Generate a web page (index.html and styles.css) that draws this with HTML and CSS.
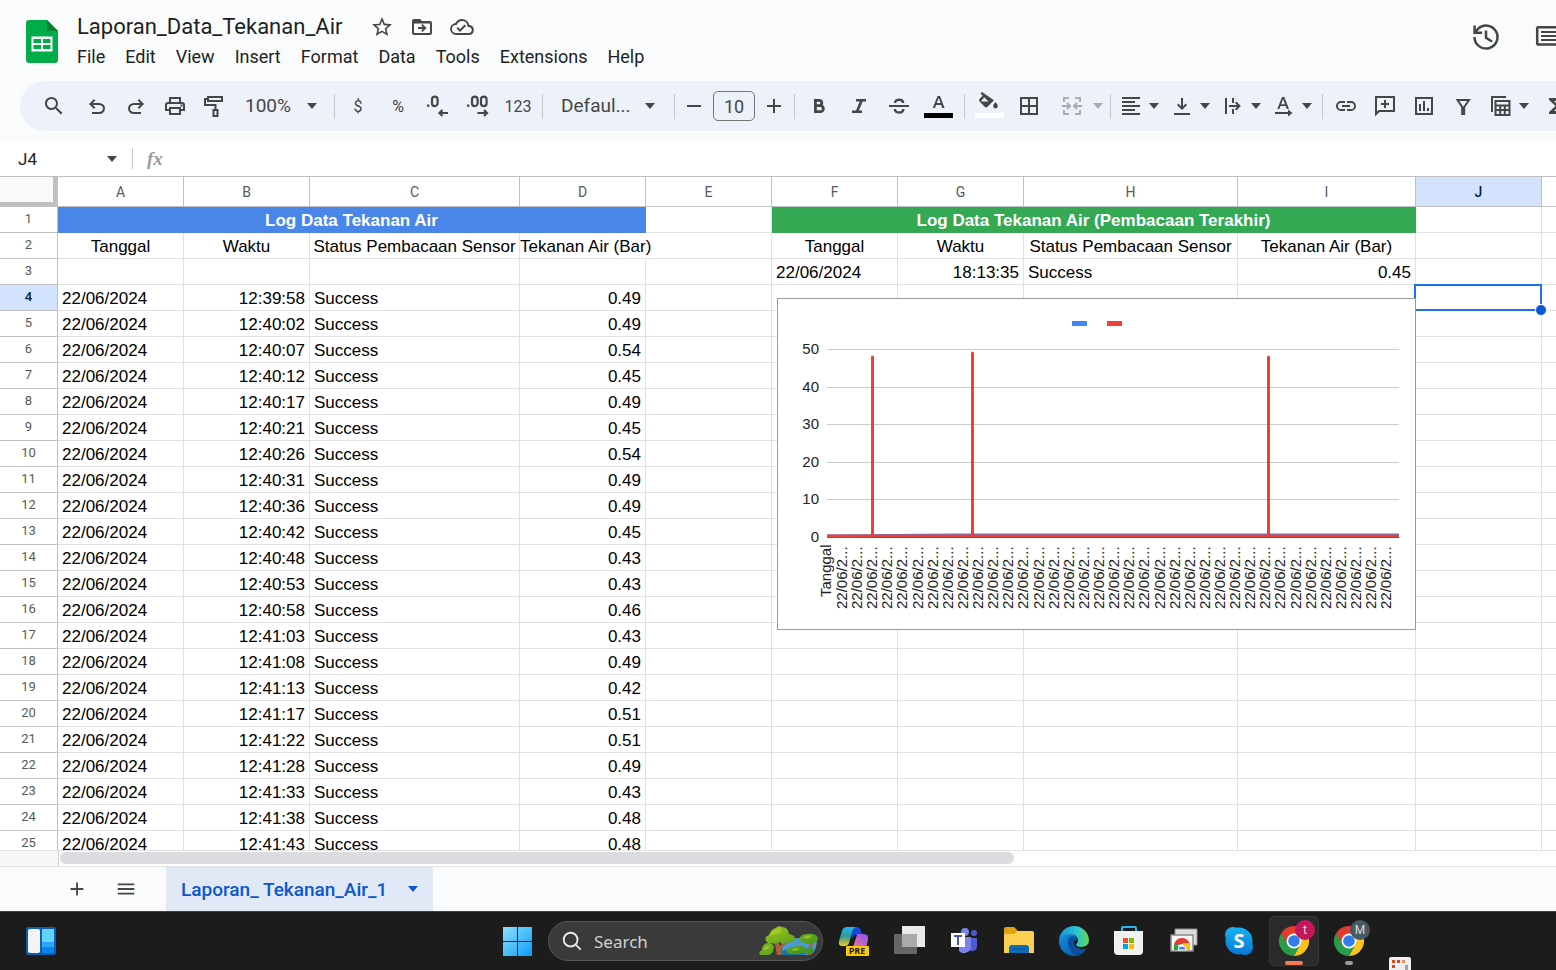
FILE: index.html
```html
<!DOCTYPE html>
<html lang="en">
<head>
<meta charset="utf-8">
<title>Laporan_Data_Tekanan_Air</title>
<link rel="stylesheet" href="styles.css">
</head>
<body>
<svg class="sprite" aria-hidden="true">
  <symbol id="caret" viewBox="0 0 12 6"><path d="M1 0h10L6 6z"/></symbol>
  <symbol id="search" viewBox="0 0 24 24"><path d="M15.5 14h-.8l-.3-.3A6.5 6.5 0 1 0 13.7 14.4l.3.3v.8l5 5 1.5-1.5zm-6 0a4.5 4.5 0 1 1 0-9 4.5 4.5 0 0 1 0 9z"/></symbol>
  <symbol id="undo" viewBox="0 0 24 24"><path d="M7 20v-2h7.100q1.600 0 2.700-.900T18 14.500t-1.200-2.500-2.700-1H7.800l2.600 2.600L9 15l-5-5 5-5 1.400 1.400L7.800 9h6.300q2.400 0 4.200 1.600T20 14.500t-1.700 3.900T14.100 20z"/></symbol>
  <symbol id="plus" viewBox="0 0 24 24"><path d="M11 5h2v6h6v2h-6v6h-2v-6H5v-2h6z"/></symbol>
  <symbol id="chrome" viewBox="0 0 32 32"><path fill="#e33b2e" d="M3 8.500 9.700 20 16 8.500H29A15 15 0 0 0 3 8.500z"/><path fill="#2a9d49" d="M3 8.500A15 15 0 0 0 16 31l6.500-11.500H10z"/><path fill="#fcc31e" d="M29 8.500H16l6.500 11L16 31A15 15 0 0 0 29 8.500z"/><circle cx="16" cy="16" r="7.500" fill="#fff"/><circle cx="16" cy="16" r="5.800" fill="#2f7de9"/></symbol>
</svg>

<header class="doc-header">
  <svg class="doc-logo" viewBox="0 0 32 44" aria-label="Sheets" role="img"><path fill="#00ac47" d="M3 0h18l11 11v29a3 3 0 0 1-3 3H3a3 3 0 0 1-3-3V3a3 3 0 0 1 3-3z"/><path fill="#00832d" d="M21 0l11 11H21z"/><path fill="#fff" fill-rule="evenodd" d="M5.500 16.500h21v15h-21zm2 2.500v4h7.500V19zm9.500 0v4h7.500V19zm-9.500 6v4h7.500v-4zm9.500 0v4h7.500v-4z"/></svg>
  <div class="doc-heading">
    <div class="title-row">
      <h1 class="doc-title">Laporan_Data_Tekanan_Air</h1>
      <button class="title-btn" aria-label="Star"><svg viewBox="0 0 24 24"><path d="M22 9.240l-7.190-.620L12 2 9.190 8.630 2 9.240l5.460 4.730L5.820 21 12 17.270 18.180 21l-1.630-7.030zM12 15.400l-3.760 2.270 1-4.280-3.320-2.880 4.380-.380L12 6.100l1.710 4.040 4.380.380-3.320 2.880 1 4.280z"/></svg></button>
      <button class="title-btn" aria-label="Move"><svg viewBox="0 0 24 24"><path fill-rule="evenodd" d="M4 4h6l2 2h8a2 2 0 0 1 2 2v10a2 2 0 0 1-2 2H4a2 2 0 0 1-2-2V6a2 2 0 0 1 2-2zm0 4.500V18h16V8.500zM12.500 9l4 4-4 4-1.300-1.300 1.700-1.800H8v-1.800h4.900l-1.700-1.800z"/></svg></button>
      <button class="title-btn" aria-label="Saved to Drive"><svg viewBox="0 0 24 24"><path fill-rule="evenodd" d="M19.350 10.040A7.490 7.490 0 0 0 12 4C9.110 4 6.600 5.640 5.350 8.040A6 6 0 0 0 6 20h13a5 5 0 0 0 .350-9.960zM19 18H6a4 4 0 0 1-.440-7.980l1.070-.110.500-.950A5.500 5.500 0 0 1 17.390 10.430l.300 1.500 1.530.110A3 3 0 0 1 19 18zm-9-3.800-2.100-2.100-1.400 1.400L10 17l6-6-1.400-1.400z"/></svg></button>
    </div>
    <nav class="menu">
      <button>File</button><button>Edit</button><button>View</button><button>Insert</button><button>Format</button><button>Data</button><button>Tools</button><button>Extensions</button><button>Help</button>
    </nav>
  </div>
  <div class="doc-actions">
    <button aria-label="Version history"><svg viewBox="0 0 30 30"><path fill="none" stroke="#444746" stroke-width="2.500" d="M3.500 15a11.500 11.500 0 1 0 3.500-8.200L4 10M3.600 3.500v7.300H11M15 8.500v7.200l6 3.800"/></svg></button>
    <button aria-label="Comments"><svg viewBox="0 0 30 30"><path fill="none" stroke="#444746" stroke-width="2.500" d="M5.200 5.200h22v21l-4-3.800h-18a1 1 0 0 1-1-1V6.200a1 1 0 0 1 1-1z"/><path stroke="#444746" stroke-width="2" d="M8 10h16M8 14h16M8 18h16"/></svg></button>
  </div>
</header>

<div class="toolbar" role="toolbar" aria-label="Main toolbar">
  <button class="tool first" aria-label="Search the menus"><svg viewBox="0 0 24 24"><use href="#search"/></svg></button>
  <div class="group tight">
    <button class="tool" aria-label="Undo"><svg viewBox="0 0 24 24"><use href="#undo"/></svg></button>
    <button class="tool" aria-label="Redo"><svg class="mirror" viewBox="0 0 24 24"><use href="#undo"/></svg></button>
    <button class="tool" aria-label="Print"><svg viewBox="0 0 24 24"><path fill-rule="evenodd" d="M6 3h12v5h1a3 3 0 0 1 3 3v6h-4v4H6v-4H2v-6a3 3 0 0 1 3-3h1zm2 2v3h8V5zM4 15h2v-2h12v2h2v-4a1 1 0 0 0-1-1H5a1 1 0 0 0-1 1zm4 0v4h8v-4zm9.500-4.500h2v2h-2z"/></svg></button>
    <button class="tool" aria-label="Paint format"><svg viewBox="0 0 24 24"><path fill="none" stroke="#444746" stroke-width="2" d="M6 3h14v4H6zM6 5H3v6h10.500V16M11.500 16h4v6h-4z"/></svg></button>
  </div>
  <label class="picker zoom-picker"><select aria-label="Zoom"><option>100%</option></select><svg class="caret"><use href="#caret"/></svg></label>
  <span class="sep"></span>
  <div class="group">
    <button class="tool text-tool" aria-label="Format as currency">$</button>
    <button class="tool text-tool" aria-label="Format as percent">%</button>
    <button class="tool" aria-label="Decrease decimal places"><svg viewBox="0 0 24 24"><path d="M1 10.500h2.300v2.300H1z"/><path fill="none" stroke="#444746" stroke-width="2.200" d="M6 5.500a2.800 2.800 0 0 1 5.600 0v3.800a2.800 2.800 0 0 1-5.600 0zM22 19h-8M16.500 16l-3 3 3 3"/></svg></button>
    <button class="tool" aria-label="Increase decimal places"><svg viewBox="0 0 24 24"><path d="M1 10.500h2.300v2.300H1z"/><path fill="none" stroke="#444746" stroke-width="2.200" d="M6 5.500a2.800 2.800 0 0 1 5.600 0v3.800a2.800 2.800 0 0 1-5.600 0zM15 5.500a2.800 2.800 0 0 1 5.600 0v3.800a2.800 2.800 0 0 1-5.600 0zM11.500 19h9M18 16l3 3-3 3"/></svg></button>
    <button class="tool text-tool" aria-label="More formats">123</button>
  </div>
  <span class="sep near"></span>
  <label class="picker font-picker"><select aria-label="Font"><option>Defaul...</option></select><svg class="caret"><use href="#caret"/></svg></label>
  <span class="sep"></span>
  <div class="size-group">
    <button class="step" aria-label="Decrease font size"><svg viewBox="0 0 24 24"><path d="M5 11h14v2H5z"/></svg></button>
    <input class="size-input" aria-label="Font size" value="10">
    <button class="step" aria-label="Increase font size"><svg viewBox="0 0 24 24"><use href="#plus"/></svg></button>
  </div>
  <span class="sep"></span>
  <div class="group">
    <button class="tool" aria-label="Bold"><svg viewBox="0 0 24 24"><path fill="none" stroke="#444746" stroke-width="2.800" d="M8.400 6.400h4.200a2.700 2.700 0 0 1 0 5.300H8.400zm0 5.300h5a2.900 2.900 0 0 1 0 5.900h-5z"/></svg></button>
    <button class="tool" aria-label="Italic"><svg viewBox="0 0 24 24"><path d="M9 5h10v2.600h-3.300l-3.800 8.800H15V19H5v-2.600h4l3.700-8.800H9z"/></svg></button>
    <button class="tool" aria-label="Strikethrough"><svg viewBox="0 0 24 24"><path fill="none" stroke="#444746" stroke-width="2" d="M2 12h20"/><path fill="none" stroke="#444746" stroke-width="2.400" d="M16.200 9C16 7 14.500 5.700 12.200 5.700S8 6.900 8 9M7.800 15c.200 2.300 1.800 3.500 4.300 3.500s4.200-1.300 4.200-3.500"/></svg></button>
    <button class="tool" aria-label="Text color"><svg class="tall" viewBox="0 0 30 30"><path d="M13.600 5h2.400l4.600 12h-2.300l-1.100-3h-5.100L11 17H8.700zm-.8 7h3.800l-1.900-5z"/><path fill="#000" d="M0 22h29v5H0z"/></svg></button>
  </div>
  <span class="sep close"></span>
  <div class="group">
    <button class="tool" aria-label="Fill color"><svg class="tall" viewBox="0 0 30 30"><path d="M8 1 6.500 2.500l2.200 2.200-3 3q-1.400 1.500 0 3l5 5q1.400 1.400 2.800 0l6.500-6.500zm2.200 5.200L14.500 10.500H7zM21.500 11s-2.300 2.500-2.300 4.100a2.300 2.300 0 0 0 4.600 0c0-1.600-2.300-4.100-2.300-4.100z"/><path fill="#fff" d="M1 22h29v5H1z"/></svg></button>
    <button class="tool" aria-label="Borders"><svg viewBox="0 0 24 24"><path fill="none" stroke="#444746" stroke-width="2" d="M4 4h16v16H4zM12 4v16M4 12h16"/></svg></button>
  </div>
  <button class="split faded" aria-label="Merge cells" disabled><svg viewBox="0 0 24 24"><path fill="none" stroke="#444746" stroke-width="2" d="M9 4H4v4M4 16v4h5M15 4h5v4M20 16v4h-5M2 12h7M22 12h-7M7 9l3 3-3 3M17 9l-3 3 3 3"/></svg><svg class="caret"><use href="#caret"/></svg></button>
  <span class="sep close"></span>
  <div class="group splits">
    <button class="split" aria-label="Horizontal align"><svg viewBox="0 0 24 24"><path d="M3 3h18v2H3zm0 4h13v2H3zm0 4h18v2H3zm0 4h13v2H3zm0 4h18v2H3z"/></svg><svg class="caret"><use href="#caret"/></svg></button>
    <button class="split" aria-label="Vertical align"><svg viewBox="0 0 24 24"><path d="M4 19h16v2H4zM11 4h2v8.200l2.600-2.600L17 11l-5 5-5-5 1.400-1.400 2.600 2.600z"/></svg><svg class="caret"><use href="#caret"/></svg></button>
    <button class="split" aria-label="Text wrapping"><svg viewBox="0 0 24 24"><path d="M4 4h2v16H4zM11 4h2v5h-2zM11 15h2v5h-2zM8 11h8l-2-2 1.400-1.400L19.800 12l-4.400 4.400L14 15l2-2H8z"/></svg><svg class="caret"><use href="#caret"/></svg></button>
    <button class="split" aria-label="Text rotation"><svg viewBox="0 0 24 24"><path d="M10 3h2.300L17 15h-2.200l-1.100-3H8.500l-1.100 3H5.300zm-.8 7.200H13L11.100 5zM3 18h13v-2.500l4.500 3.500-4.500 3.500V20H3z"/></svg><svg class="caret"><use href="#caret"/></svg></button>
  </div>
  <span class="sep after-splits"></span>
  <div class="group tight">
    <button class="tool" aria-label="Insert link"><svg viewBox="0 0 24 24"><path d="M3.900 12A3.100 3.100 0 0 1 7 8.900h4V7H7a5 5 0 0 0 0 10h4v-1.900H7A3.100 3.100 0 0 1 3.900 12zM8 13h8v-2H8zm9-6h-4v1.900h4a3.100 3.100 0 0 1 0 6.200h-4V17h4a5 5 0 0 0 0-10z"/></svg></button>
    <button class="tool" aria-label="Insert comment"><svg viewBox="0 0 24 24"><path fill="none" stroke="#444746" stroke-width="2" d="M3 20V3h18v14H6zM12 6v8M8 10h8"/></svg></button>
    <button class="tool" aria-label="Insert chart"><svg viewBox="0 0 24 24"><path fill="none" stroke="#444746" stroke-width="2" d="M4 4h16v16H4zM8 10v7M12 7v10M16 14v3"/></svg></button>
    <button class="tool" aria-label="Create a filter"><svg viewBox="0 0 24 24"><path fill="none" stroke="#444746" stroke-width="2" d="M6.500 6h11.500l-4.800 7V20h-2v-7z"/></svg></button>
  </div>
  <button class="split table-views" aria-label="Table views"><svg viewBox="0 0 24 24"><path fill="none" stroke="#444746" stroke-width="2" d="M6.500 7h14v14h-14zM6.500 11.500h14M6.500 16h14M11.200 12v9M15.800 12v9M3 18V3h14"/></svg><svg class="caret"><use href="#caret"/></svg></button>
  <button class="tool" aria-label="Functions"><svg viewBox="0 0 24 24"><path d="M18 4H6v2l6.500 6L6 18v2h12v-3h-7l5-5-5-5h7z"/></svg></button>
</div>

<div class="formula-bar">
  <input class="name-box" aria-label="Name box" value="J4">
  <button class="name-menu" aria-label="Named ranges"><svg class="caret"><use href="#caret"/></svg></button>
  <span class="formula-sep"></span>
  <label class="fx" for="formula">fx</label>
  <input id="formula" class="formula-input">
</div>

<main class="sheet">
  <table class="grid">
    <colgroup><col class="w-row"><col class="w-std"><col class="w-std"><col class="w-status"><col class="w-std"><col class="w-std"><col class="w-std"><col class="w-std"><col class="w-status2"><col class="w-reading"><col class="w-std"><col class="w-std"></colgroup>
    <thead>
      <tr><td class="corner"></td><th>A</th><th>B</th><th>C</th><th>D</th><th>E</th><th>F</th><th>G</th><th>H</th><th>I</th><th class="active">J</th><th></th></tr>
    </thead>
    <tbody id="rows">
      <tr><th>1</th><td colspan="4" class="banner blue">Log Data Tekanan Air</td><td></td><td colspan="4" class="banner green">Log Data Tekanan Air (Pembacaan Terakhir)</td><td></td><td></td></tr>
      <tr><th>2</th><td class="label">Tanggal</td><td class="label">Waktu</td><td class="label">Status Pembacaan Sensor</td><td class="label spill">Tekanan Air (Bar)</td><td></td><td class="label">Tanggal</td><td class="label">Waktu</td><td class="label">Status Pembacaan Sensor</td><td class="label">Tekanan Air (Bar)</td><td></td><td></td></tr>
      <tr><th>3</th><td></td><td></td><td></td><td></td><td></td><td>22/06/2024</td><td class="num">18:13:35</td><td>Success</td><td class="num">0.45</td><td></td><td></td></tr>
    </tbody>
  </table>
  <div class="selection"><span class="handle"></span></div>
  <figure class="chart">
    <svg id="chart" viewBox="0 0 639 332" role="img" aria-label="Tekanan air chart"></svg>
  </figure>
</main>

<div class="scroll-strip"><div class="strip-head"></div><div class="track"><div class="thumb"></div></div></div>

<footer class="tabs">
  <button class="tab-btn" aria-label="Add sheet"><svg viewBox="0 0 24 24"><use href="#plus"/></svg></button>
  <button class="tab-btn" aria-label="All sheets"><svg viewBox="0 0 24 24"><path d="M3 6h18v2H3zm0 5h18v2H3zm0 5h18v2H3z"/></svg></button>
  <button class="tab">Laporan_ Tekanan_Air_1 <svg class="caret"><use href="#caret"/></svg></button>
</footer>

<div class="taskbar">
  <button class="widgets" aria-label="Widgets"><svg viewBox="0 0 30 28"><rect width="30" height="28" rx="2" fill="#0c5fb3"/><rect x="2" y="2" width="12" height="24" rx="2" fill="#f4f4f4"/><path fill="#62d4fb" d="M16 2h12v13H16z"/><path fill="#2aa6f6" d="M16 15h12v5H16z"/><path fill="#0a84ea" d="M16 20h12v6H16z"/></svg></button>
  <div class="apps">
    <button class="app" aria-label="Start"><svg viewBox="0 0 32 32"><defs><linearGradient id="win" x1="0" y1="0" x2="1" y2="1"><stop offset="0" stop-color="#8be2ff"/><stop offset="1" stop-color="#0c9bf5"/></linearGradient></defs><path fill="url(#win)" d="M1 2h14v14H1zM16 2h14v14H16zM1 17h14v14H1zM16 17h14v14H16z"/></svg></button>
    <label class="search">
      <svg class="search-icon" viewBox="0 0 24 24"><path fill="none" stroke="#e8e8e8" stroke-width="2" d="M10.500 3a7.500 7.500 0 1 0 0 15 7.500 7.500 0 0 0 0-15zM16 16l5.500 5.500"/></svg>
      <input placeholder="Search" aria-label="Search">
      <svg class="scene" viewBox="0 0 60 32"><defs><linearGradient id="leaf" x1="0" y1="0" x2="1" y2="1"><stop offset="0" stop-color="#a5c91c"/><stop offset="1" stop-color="#2e8b1d"/></linearGradient></defs><path fill="#4b9ad8" d="M22 16c12-4 24-4 36 0-1 9-4 14-9 14H20c4-4 3-8 2-14z"/><path fill="#176fa5" d="M22 27c8-5 18-3 26 2l-6 1H20z"/><path fill="#a8623a" d="M15 14h3l3 7 6-5 1 2-6 6 1 6h-5zM51 18h3l-2 12h-4z"/><path fill="url(#leaf)" d="M1 30q-2-3 2-5 0-6 6-7 5 0 6 4-1 8-6 8zM7 16q-2-4 3-6 2-6 7-7 2-3 6-1 6 0 7 7 7 1 6 6-3 4-8 2-4 3-7 0-5 3-8 1-4 1-6-2zM27 27q1-5 8-5 8-4 13 3-3 5-11 4-6 1-10-2zM40 15q1-6 8-6 9-1 11 4 0 5-6 5-6 3-13-3zM47 28q-1-4 3-6 4 0 5 4-3 4-8 2z"/><path fill="#b8d42e" opacity=".6" d="M10 11q4-6 10-8 3 1 2 5-6 1-12 3zM4 25q3-5 7-4-1 4-7 4zM44 13q4-4 9-2-3 4-9 2zM32 25q5-3 9-1-4 3-9 1z"/></svg>
    </label>
    <button class="app" aria-label="Copilot"><svg viewBox="0 0 32 32"><defs><linearGradient id="cp1" x1="0" y1="0" x2="0" y2="1"><stop offset="0" stop-color="#1cb7f5"/><stop offset=".5" stop-color="#2f9d91"/><stop offset="1" stop-color="#f5cb20"/></linearGradient><linearGradient id="cp2" x1="0" y1="1" x2="1" y2="0"><stop offset="0" stop-color="#fb7a80"/><stop offset="1" stop-color="#8a52f4"/></linearGradient></defs><path fill="#1649d8" d="M12 2h7q3 0 4 4l1 4h-6q-3 0-4 4z"/><path fill="url(#cp2)" d="M20 9h6q5 0 4 6l-2 8H10q4 0 6-6l1-4q1-4 3-4z"/><path fill="#1c1c1c" d="M16 10h3l-4 12h-4z"/><path fill="url(#cp1)" d="M9 2h9q-3 1-4 5l-3 11q-1 3-4 3H4q-4 0-3-5l3-10q1-4 5-4z"/><rect x="8" y="21" width="23" height="10" rx="1" fill="#ffc80d"/><text x="19" y="29" class="pre-tag">PRE</text></svg></button>
    <button class="app" aria-label="Task view"><svg viewBox="0 0 32 32"><path fill="#e9e9e9" d="M9 1h23v21H9z"/><path fill="#666" d="M1 9h23v20H1z"/><path fill="#aaa" d="M9 9h15v13H9z"/></svg></button>
    <button class="app" aria-label="Teams"><svg viewBox="0 0 32 32"><circle cx="17" cy="7" r="4" fill="#7b83eb"/><circle cx="26" cy="8" r="3" fill="#5059c9"/><path fill="#5059c9" d="M20 13h9v9a5 5 0 0 1-9 2z"/><path fill="#7b83eb" d="M11 12h12v9a7 7 0 0 1-12 5z"/><path fill="#fff" d="M3 8h14v14H3z"/><path fill="#4b53bc" d="M6 10h8v2h-3v8H9v-8H6z"/></svg></button>
    <button class="app" aria-label="File Explorer"><svg viewBox="0 0 32 32"><path fill="#e2a013" d="M1 4q0-2 2-2h8l4 4v5H1z"/><path fill="#fdd054" d="M1 9h10l4-3h14q2 0 2 2v20H1z"/><path fill="#0c6dbb" d="M6 28v-5q0-3 3-3h14q3 0 3 3v5z"/><path stroke="#064a8a" d="M9 24h14"/></svg></button>
    <button class="app" aria-label="Edge"><svg viewBox="0 0 32 32"><defs><linearGradient id="eg1"><stop offset="0" stop-color="#168fe0"/><stop offset=".6" stop-color="#2ec5cf"/><stop offset="1" stop-color="#63d94d"/></linearGradient><linearGradient id="eg2" x1="0" y1="0" x2="1" y2="1"><stop offset="0" stop-color="#1393e2"/><stop offset="1" stop-color="#0b4d9c"/></linearGradient></defs><path fill="url(#eg2)" d="M1 15q4-8 11-7 6 2 7 7-5 0-3 5 3 5 12 4-5 7-12 7A15 15 0 0 1 1 15z"/><path fill="#0b4e9e" d="M10 18q-1-6 5-7 3 1 4 4-5 0-3 5 3 5 12 4-4 6-9 7-8-4-9-13z"/><path fill="url(#eg1)" d="M1 15A15 15 0 0 1 16 1a15 15 0 0 1 15 14q0 7-8 7-5 0-5-3 2-1 2-4-1-6-8-6-7 0-11 6z"/></svg></button>
    <button class="app" aria-label="Microsoft Store"><svg viewBox="0 0 32 32"><path fill="none" stroke="#28b7ed" stroke-width="2" d="M9 8V3q0-1 1-1h12q1 0 1 1v5"/><path fill="#f1f1f1" d="M1 6h29v20q0 4-4 4H5q-4 0-4-4z"/><path fill="#f25022" d="M10 13h5v5h-5z"/><path fill="#7fba00" d="M16 13h5v5h-5z"/><path fill="#00a4ef" d="M10 19h5v5h-5z"/><path fill="#ffb900" d="M16 19h5v5h-5z"/></svg></button>
    <button class="app" aria-label="Remote desktop"><svg viewBox="0 0 32 32"><path fill="#ddd" stroke="#8c8c8c" d="M7 4h22v16H7z"/><path fill="#f6f6f6" stroke="#8c8c8c" stroke-width="1.500" d="M3 10h22v16H3z"/><path fill="#e33b2e" d="M6 21a8 8 0 0 1 16 0l-8-2z"/><path fill="#2a9d49" d="M6 25q-1-5 2-7l5 7z"/><path fill="#fcc31e" d="M22 25q1-5-1-7h-6l2 7z"/><path fill="#4384f3" stroke="#fff" d="M10 25a4 4 0 1 1 8 0z"/></svg></button>
    <button class="app" aria-label="Skype"><svg viewBox="0 0 32 32"><defs><linearGradient id="sk" gradientUnits="userSpaceOnUse" x1="0" y1="2" x2="0" y2="30"><stop offset="0" stop-color="#18b3f3"/><stop offset="1" stop-color="#0878d4"/></linearGradient></defs><g fill="url(#sk)"><circle cx="16" cy="16" r="13.500"/><circle cx="10" cy="10" r="8"/><circle cx="22" cy="22" r="8"/></g><text x="16" y="23" class="skype-s">S</text></svg></button>
    <button class="app current" aria-label="Chrome, profile t"><svg viewBox="0 0 32 32"><use href="#chrome"/></svg><span class="badge pink">t</span><span class="running"></span></button>
    <button class="app" aria-label="Chrome, profile M"><svg viewBox="0 0 32 32"><use href="#chrome"/></svg><span class="badge slate">M</span><span class="running idle"></span></button>
  </div>
  <svg class="tray-peek" viewBox="0 0 22 13" aria-hidden="true"><rect width="22" height="18" rx="2" fill="#efefef"/><path fill="#d9481c" d="M3 3h3v3H3zm5 0h3v3H8zM3 8h3v3H3z"/><path fill="#f08b6c" d="M13 3h3v3h-3z"/><path fill="#9da3a6" d="M16 8h3v5h-3z"/></svg>
</div>
<script src="script.js"></script>
</body>
</html>
```

FILE: styles.css
```css
* { box-sizing: border-box; }

body {
  margin: 0;
  height: 100vh;
  display: flex;
  flex-direction: column;
  overflow: hidden;
  background: #f9fbfd;
  color: #1f1f1f;
  font-family: Roboto, "Liberation Sans", sans-serif;
}

button, input, select {
  font: inherit;
  color: inherit;
  background: none;
  border: 0;
  padding: 0;
  outline: 0;
}

.sprite { display: none; }
svg { display: block; fill: #444746; }
.caret { width: 12px; height: 6px; flex: none; }

/* Document header */
.doc-header {
  display: flex;
  flex: none;
  height: 81px;
  padding: 13px 0 0 26px;
}
.doc-logo { width: 32px; height: 44px; margin-top: 7px; flex: none; }
.doc-heading { margin-left: 19px; }
.title-row { display: flex; align-items: center; height: 28px; gap: 16px; }
.doc-title { margin: 0 12px 0 0; font-size: 22px; font-weight: 400; line-height: 28px; }
.title-btn svg { width: 24px; height: 24px; }
.menu { display: flex; gap: 20px; margin-top: 4px; }
.menu button { font-size: 18px; line-height: 24px; }
.doc-actions { display: flex; gap: 32px; margin: 9px -7px 0 auto; }
.doc-actions button { height: 30px; }
.doc-actions svg { width: 30px; height: 30px; }

/* Toolbar */
.toolbar {
  display: flex;
  align-items: center;
  flex: none;
  height: 50px;
  margin-left: 20px;
  padding-left: 14px;
  overflow: hidden;
  border-radius: 25px 0 0 25px;
  background: #edf1fa;
  color: #444746;
}
.group { display: flex; flex: none; }
.tool {
  flex: none;
  width: 40px;
  height: 36px;
  display: flex;
  align-items: center;
  justify-content: center;
}
.tool svg, .split svg:first-child, .step svg { width: 24px; height: 24px; flex: none; }
.tool .tall { width: 30px; height: 30px; }
.tool .mirror { transform: scaleX(-1); }
.tight .tool { width: 39px; }
.first { margin-right: 3px; }
.text-tool { font-size: 16px; }
.sep { flex: none; width: 1px; height: 25px; margin: 0 3px 0 8px; background: #c7c7c7; }
.sep.near { margin: 0 6px 0 4px; }
.sep.close { margin: 0 4px 0 5px; }
.sep.after-splits { margin: 0 3px 0 1px; }
.picker { display: flex; flex: none; align-items: center; position: relative; }
.picker select { appearance: none; width: 100%; font-size: 19px; line-height: 26px; }
.picker .caret { position: absolute; right: 8px; pointer-events: none; }
.zoom-picker { width: 93px; }
.zoom-picker select { padding-left: 12px; }
.font-picker { width: 117px; }
.font-picker select { padding-left: 12px; }
.font-picker .caret { right: 10px; }
.size-group { display: flex; flex: none; align-items: center; gap: 5px; margin-left: 2px; }
.step { width: 28px; height: 28px; display: flex; align-items: center; justify-content: center; }
.size-group + .sep { margin: 0 4px 0 6px; }
.size-input {
  width: 42px;
  height: 30px;
  border: 1px solid #747775;
  border-radius: 5px;
  font-size: 18px;
  text-align: center;
}
.split {
  flex: none;
  width: 51px;
  height: 36px;
  padding-left: 2px;
  display: flex;
  align-items: center;
  gap: 5px;
}
.faded { width: 47px; margin-left: 9px; gap: 8px; opacity: .4; }
.splits { margin-left: 2px; }
.table-views { width: 48px; margin-left: 5px; }

/* Formula bar */
.formula-bar {
  display: flex;
  align-items: center;
  flex: none;
  height: 35px;
  margin-top: 10px;
  padding-left: 18px;
  background: #fff;
}
.name-box { width: 84px; height: 24px; font-size: 17px; }
.name-menu { width: 20px; height: 24px; display: flex; align-items: center; justify-content: center; }
.formula-sep { width: 1px; height: 21px; margin: 0 14px 0 10px; background: #c7c7c7; }
.fx { font: italic bold 19px "Liberation Serif", serif; color: #9a9b9b; }
.formula-input { flex: 1; height: 24px; margin-left: 12px; font-size: 17px; }

/* Grid */
.sheet {
  position: relative;
  flex: 1;
  min-height: 0;
  overflow: hidden;
  background: #fff;
  border-top: 1px solid #c0c0c0;
  border-bottom: 1px solid #e1e1e1;
}
.grid {
  width: 1668px;
  table-layout: fixed;
  border-collapse: separate;
  border-spacing: 0;
  color: #000;
  font-family: "Liberation Sans", Arial, sans-serif;
  font-size: 17px;
}
.w-row { width: 58px; }
.w-std { width: 126px; }
.w-status { width: 210px; }
.w-status2 { width: 214px; }
.w-reading { width: 178px; }
.grid th, .grid td {
  padding: 0 4px;
  border-right: 1px solid #e1e1e1;
  border-bottom: 1px solid #e1e1e1;
  white-space: nowrap;
}
.grid thead th, .grid tbody th {
  border-color: #c0c0c0;
  font-family: Roboto, "Liberation Sans", sans-serif;
  font-weight: 400;
  color: #575a5a;
}
.grid thead th { height: 30px; font-size: 14px; }
.grid thead .corner { background: #f8f9fa; border: solid #c0c0c0; border-width: 0 5px 5px 0; }
.grid tbody tr { height: 26px; }
.grid tbody th { padding: 0; font-size: 13px; line-height: 23px; vertical-align: top; }
.grid tbody td { line-height: 22px; vertical-align: bottom; }
.grid th.active { background: #d3e3fd; color: #041e49; font-weight: 500; }
.grid .banner { color: #fff; font-weight: 700; text-align: center; }
.grid .blue { background: #4a86e8; border-color: #4a86e8; }
.grid .green { background: #34a853; border-color: #34a853; }
.grid .label { padding: 0; text-align: center; }
.grid .spill { border-right-color: transparent; }
.grid .num { text-align: right; }

.selection {
  position: absolute;
  left: 1414px;
  top: 107px;
  width: 128px;
  height: 27px;
  border: 2px solid #1a73e8;
}
.handle {
  position: absolute;
  right: -7px;
  bottom: -7px;
  width: 12px;
  height: 12px;
  border: 1px solid #fff;
  border-radius: 50%;
  background: #0b57d0;
}
.chart {
  position: absolute;
  left: 777px;
  top: 121px;
  width: 639px;
  height: 332px;
  margin: 0;
  background: #fff;
  outline: 1px solid #999;
  outline-offset: -1px;
}
.chart svg { width: 100%; height: 100%; }
.chart text { font: 15px "Liberation Sans", Arial, sans-serif; fill: #222; }
.chart .y-label { text-anchor: end; }
.gridline { stroke: #ccc; }
.axis { stroke: #444; }
.series { fill: none; stroke-linejoin: round; }
.series-a { stroke: #4285f4; stroke-width: 3; }
.series-b { stroke: #ea4335; stroke-width: 3; }
.spike { stroke-width: 3; stroke-linecap: round; }

/* Horizontal scroll strip */
.scroll-strip { display: flex; flex: none; height: 16px; background: #fff; border-bottom: 1px solid #e1e1e1; }
.strip-head { width: 59px; background: #f8f8f8; border-right: 1px solid #d0d0d0; }
.track { flex: 1; padding: 1px; }
.thumb { width: 63.8%; height: 12px; border-radius: 6px; background: #dadce0; }

/* Sheet tabs */
.tabs { display: flex; flex: none; height: 44px; padding-left: 52px; }
.tab-btn { width: 49px; display: flex; align-items: center; justify-content: center; }
.tab-btn svg { width: 22px; height: 22px; }
.tab {
  min-width: 267px;
  margin-left: 16px;
  padding: 0 14px 0 15px;
  display: flex;
  align-items: center;
  justify-content: space-between;
  background: #e1e9f7;
  color: #0b57d0;
  font-size: 19px;
  font-weight: 500;
}
.tab .caret { fill: #0b57d0; }

/* Taskbar */
.taskbar {
  position: relative;
  display: flex;
  align-items: center;
  flex: none;
  height: 59px;
  padding-left: 26px;
  border-top: 1px solid #3c403e;
  background: #1c1c1c;
}
.widgets svg { width: 30px; height: 28px; }
.apps { display: flex; align-items: center; margin-left: 437px; gap: 5px; }
.app {
  position: relative;
  width: 50px;
  height: 50px;
  display: flex;
  align-items: center;
  justify-content: center;
  border-radius: 5px;
}
.app svg { width: 32px; height: 32px; }
.app.current { background: #2a2a2a; outline: 1px solid #363636; outline-offset: -1px; }
.search {
  display: flex;
  align-items: center;
  width: 275px;
  height: 40px;
  margin-right: 1px;
  padding: 0 3px 0 12px;
  border: 1px solid #555;
  border-radius: 20px;
  background: #3a3a3a;
}
.search-icon { width: 22px; height: 22px; flex: none; }
.search input {
  flex: 1;
  min-width: 0;
  padding-left: 11px;
  font: 17px "Noto Sans", sans-serif;
}
.search input::placeholder { color: #d0d0d0; opacity: 1; }
.scene { width: 60px; height: 32px; flex: none; }
.pre-tag { font: 700 9px "Open Sans", sans-serif; text-anchor: middle; fill: #1c1c1c; }
.skype-s { font: 700 20px "Open Sans", sans-serif; text-anchor: middle; fill: #fff; }
.badge {
  position: absolute;
  right: 4px;
  top: 4px;
  width: 20px;
  height: 20px;
  border-radius: 50%;
  color: #ddd;
  font-size: 12px;
  line-height: 20px;
  text-align: center;
}
.pink { background: #c2185b; }
.slate { background: #455a64; }
.running {
  position: absolute;
  left: 16px;
  bottom: 1px;
  width: 18px;
  height: 4px;
  border-radius: 2px;
  background: #f4795b;
}
.running.idle { left: 21px; width: 8px; background: #9a9a9a; }
.tray-peek { position: absolute; left: 1389px; bottom: 0; width: 22px; height: 13px; }
```

FILE: script.js
```js
const readings = [
  ["12:39:58", "0.49"], ["12:40:02", "0.49"], ["12:40:07", "0.54"], ["12:40:12", "0.45"],
  ["12:40:17", "0.49"], ["12:40:21", "0.45"], ["12:40:26", "0.54"], ["12:40:31", "0.49"],
  ["12:40:36", "0.49"], ["12:40:42", "0.45"], ["12:40:48", "0.43"], ["12:40:53", "0.43"],
  ["12:40:58", "0.46"], ["12:41:03", "0.43"], ["12:41:08", "0.49"], ["12:41:13", "0.42"],
  ["12:41:17", "0.51"], ["12:41:22", "0.51"], ["12:41:28", "0.49"], ["12:41:33", "0.43"],
  ["12:41:38", "0.48"], ["12:41:43", "0.48"]
];

document.getElementById("rows").insertAdjacentHTML("beforeend", readings.map(([time, bar], i) => {
  const row = i + 4;
  return `<tr><th${row === 4 ? ' class="active"' : ""}>${row}</th><td>22/06/2024</td>` +
    `<td class="num">${time}</td><td>Success</td><td class="num">${bar}</td>${"<td></td>".repeat(7)}</tr>`;
}).join(""));

/* Plot area in chart units */
const left = 50, right = 622, top50 = 51, zero = 239;
const y = value => Math.round(zero - value * (zero - top50) / 50);

let svg = `<rect x="295" y="23" width="15" height="5" fill="#4285f4"/>` +
  `<rect x="330" y="23" width="15" height="5" fill="#ea4335"/>`;

for (const value of [50, 40, 30, 20, 10, 0]) {
  const line = y(value) + 0.5;
  svg += `<path class="${value ? "gridline" : "axis"}" d="M${left} ${line}H${right}"/>` +
    `<text class="y-label" x="42" y="${y(value) + 5}">${value}</text>`;
}

svg += `<path class="series series-a" d="M${left} 238L180 237H${right}"/>` +
  `<path class="series series-b" d="M${left} 238H${right}"/>`;
for (const [x, value] of [[95, 48], [195, 49], [491, 48]]) {
  svg += `<path class="series series-b spike" d="M${x + 0.5} 238V${y(value)}"/>`;
}

svg += `<text transform="translate(54 299) rotate(-90)">Tanggal</text>`;
for (let i = 0; i < 37; i++) {
  const x = Math.round(70 + i * 15.12);
  svg += `<text transform="translate(${x} 311) rotate(-90)">22/06/2...</text>`;
}
document.getElementById("chart").innerHTML = svg;
```
